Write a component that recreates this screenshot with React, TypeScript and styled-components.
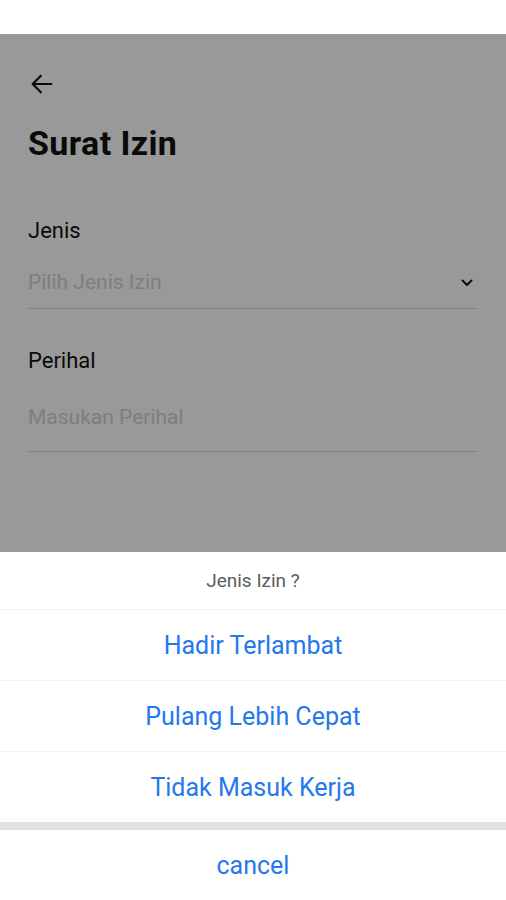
import styled, { createGlobalStyle } from 'styled-components';

const GlobalStyle = createGlobalStyle`
  html, body {
    margin: 0;
    padding: 0;
    background: #ffffff;
    font-family: Roboto, "Noto Sans", sans-serif;
  }
`;

const Phone = styled.div`
  width: 506px;
  height: 900px;
  display: flex;
  flex-direction: column;
  overflow: hidden;
  background: #ffffff;
`;

const StatusBar = styled.div`
  height: 34px;
  flex-shrink: 0;
  background: #ffffff;
`;

const Screen = styled.div`
  position: relative;
  flex: 1;
  background: #ffffff;
  padding: 36px 28px 0;
`;

const Dim = styled.div`
  position: absolute;
  inset: 0;
  background: rgba(0, 0, 0, 0.4);
`;

const BackButton = styled.button`
  display: flex;
  padding: 0;
  border: none;
  background: none;
  width: 28px;
  height: 28px;
  color: #111;
`;

const Title = styled.h1`
  margin: 26px 0 0;
  font-size: 34px;
  font-weight: 700;
  line-height: 38px;
  letter-spacing: 0.4px;
  color: #111;
`;

const Field = styled.div<{ top: number }>`
  display: flex;
  flex-direction: column;
  margin-top: ${(p) => p.top}px;
`;

const Label = styled.label`
  font-size: 22px;
  line-height: 26px;
  color: #111;
`;

const InputRow = styled.div<{ height: number; bottom: number }>`
  display: flex;
  align-items: flex-end;
  justify-content: space-between;
  box-sizing: border-box;
  height: ${(p) => p.height}px;
  padding: 0 5px ${(p) => p.bottom}px 0;
  border-bottom: 1px solid #d9d9d9;
`;

const Placeholder = styled.span`
  font-size: 21px;
  line-height: 25px;
  color: #d2d2d2;
`;

const ChevronWrap = styled.span`
  display: flex;
  align-items: center;
  height: 25px;
`;

const Sheet = styled.div`
  flex-shrink: 0;
  display: flex;
  flex-direction: column;
  background: #ffffff;
`;

const SheetTitle = styled.div`
  height: 57px;
  display: flex;
  align-items: center;
  justify-content: center;
  font-size: 19px;
  color: #5c5c5c;
  border-bottom: 1px solid #f1f1f1;
`;

const Option = styled.button<{ last?: boolean }>`
  height: ${(p) => (p.last ? 70 : 71)}px;
  display: flex;
  align-items: center;
  justify-content: center;
  border: none;
  border-bottom: ${(p) => (p.last ? 'none' : '1px solid #f1f1f1')};
  background: #ffffff;
  font-family: inherit;
  font-size: 25px;
  color: #2478ec;
  padding: 0;
`;

const Gap = styled.div`
  height: 8px;
  background: #e1e1e1;
`;

const ArrowLeft = () => (
  <svg width="28" height="28" viewBox="0 0 24 24" fill="none">
    <path d="M20 12H4.5M11 5l-7 7 7 7" stroke="currentColor" strokeWidth="1.9" strokeLinecap="round" strokeLinejoin="round" />
  </svg>
);

const Chevron = () => (
  <svg width="12" height="8" viewBox="0 0 12 8" fill="none">
    <path d="M1.5 1.5L6 6l4.5-4.5" stroke="#111" strokeWidth="2" strokeLinecap="round" strokeLinejoin="round" />
  </svg>
);

const options = ['Hadir Terlambat', 'Pulang Lebih Cepat', 'Tidak Masuk Kerja'];

export default function App() {
  return (
    <Phone>
      <GlobalStyle />
      <StatusBar />
      <Screen>
        <BackButton aria-label="back">
          <ArrowLeft />
        </BackButton>
        <Title>Surat Izin</Title>
        <Field top={56}>
          <Label>Jenis</Label>
          <InputRow height={65} bottom={13}>
            <Placeholder>Pilih Jenis Izin</Placeholder>
            <ChevronWrap>
              <Chevron />
            </ChevronWrap>
          </InputRow>
        </Field>
        <Field top={39}>
          <Label>Perihal</Label>
          <InputRow height={78} bottom={21}>
            <Placeholder>Masukan Perihal</Placeholder>
          </InputRow>
        </Field>
        <Dim />
      </Screen>
      <Sheet>
        <SheetTitle>Jenis Izin ?</SheetTitle>
        {options.map((o, i) => (
          <Option key={o} last={i === options.length - 1}>
            {o}
          </Option>
        ))}
        <Gap />
        <Option last>cancel</Option>
      </Sheet>
    </Phone>
  );
}
